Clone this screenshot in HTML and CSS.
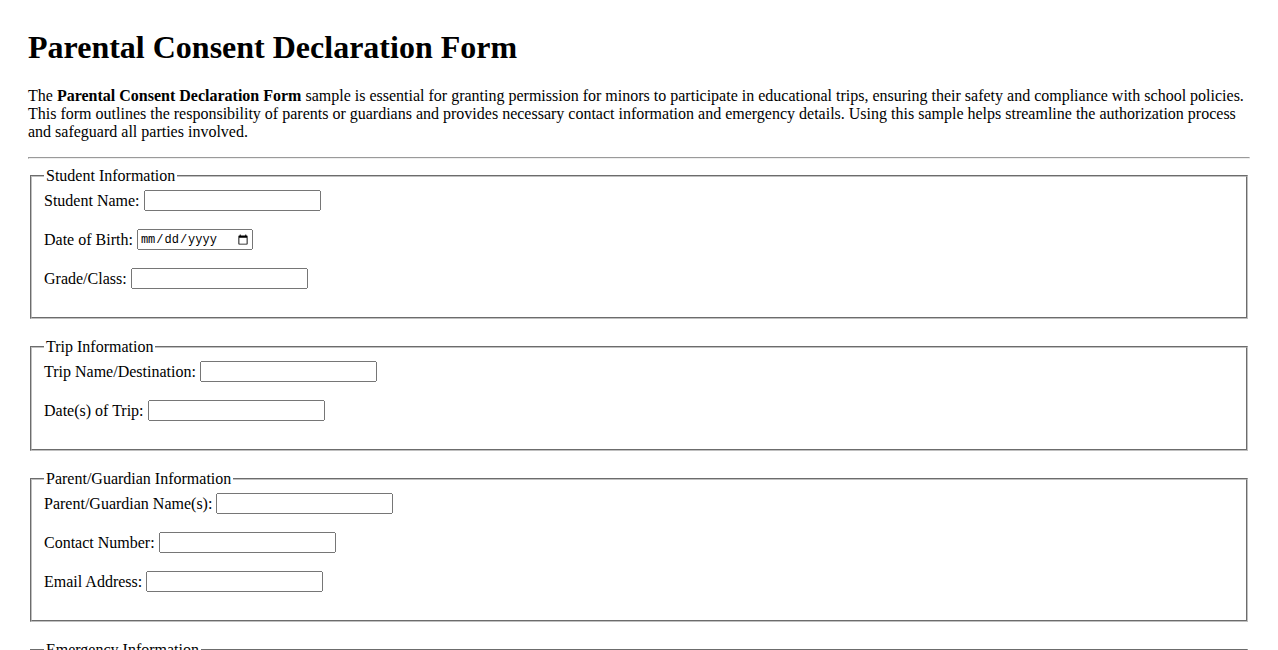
FILE: index.html
```html
<!DOCTYPE html>
<html lang="en">
<head>
<meta charset="utf-8">
<title>Parental Consent Declaration Form</title>
<link rel="stylesheet" href="styles.css">
</head>
<body class="page">
<h1 class="title">Parental Consent Declaration Form</h1>
<p class="intro">The <strong>Parental Consent Declaration Form</strong> sample is essential for granting permission for minors to participate in educational trips, ensuring their safety and compliance with school policies. This form outlines the responsibility of parents or guardians and provides necessary contact information and emergency details. Using this sample helps streamline the authorization process and safeguard all parties involved.</p>
<hr class="rule">
<form class="form">
  <fieldset class="group">
    <legend class="group-title">Student Information</legend>
    <div class="field"><label for="sname">Student Name:</label> <input class="input" type="text" id="sname"></div>
    <div class="field"><label for="dob">Date of Birth:</label> <input class="input input-date" type="date" id="dob"></div>
    <div class="field"><label for="grade">Grade/Class:</label> <input class="input" type="text" id="grade"></div>
  </fieldset>
  <fieldset class="group">
    <legend class="group-title">Trip Information</legend>
    <div class="field"><label for="trip">Trip Name/Destination:</label> <input class="input" type="text" id="trip"></div>
    <div class="field"><label for="tdate">Date(s) of Trip:</label> <input class="input" type="text" id="tdate"></div>
  </fieldset>
  <fieldset class="group">
    <legend class="group-title">Parent/Guardian Information</legend>
    <div class="field"><label for="pname">Parent/Guardian Name(s):</label> <input class="input" type="text" id="pname"></div>
    <div class="field"><label for="phone">Contact Number:</label> <input class="input" type="text" id="phone"></div>
    <div class="field"><label for="email">Email Address:</label> <input class="input" type="text" id="email"></div>
  </fieldset>
  <fieldset class="group">
    <legend class="group-title">Emergency Information</legend>
    <div class="field"><label for="ename">Emergency Contact Name:</label> <input class="input" type="text" id="ename"></div>
    <div class="field"><label for="ephone">Emergency Contact Number:</label> <input class="input" type="text" id="ephone"></div>
    <div class="field"><label for="medical">Medical Conditions/Allergies:</label> <input class="input" type="text" id="medical"></div>
  </fieldset>
</form>
</body>
</html>
```
FILE: styles.css
```css
html {
  background: #fff;
}
.page {
  margin: 0;
  padding: 29px 28px 28px;
  font-family: "Liberation Serif", "Times New Roman", serif;
  font-size: 16px;
  color: #000;
}
.title {
  font-size: 32px;
  font-weight: bold;
  margin: 0 0 21.44px;
}
.intro {
  margin: 0 0 16px;
}
.rule {
  margin: 0 0 8px;
}
.form {
  margin: 0;
}
.group {
  margin: 0 2px 19.4px;
  padding: 4.6px 12px 10px;
  border: 2px groove rgb(192, 192, 192);
}
.group-title {
  padding: 0 2px;
}
.field {
  display: flex;
  align-items: center;
  gap: 4px;
  height: 21px;
  margin-bottom: 18px;
}
.input {
  box-sizing: border-box;
  width: 177px;
  height: 21px;
  margin: 0;
  font-family: Arial, "Liberation Sans", sans-serif;
}
.input-date {
  width: 116px;
  font-family: "Liberation Mono", "DejaVu Sans Mono", monospace;
  font-size: 12px;
}
```
